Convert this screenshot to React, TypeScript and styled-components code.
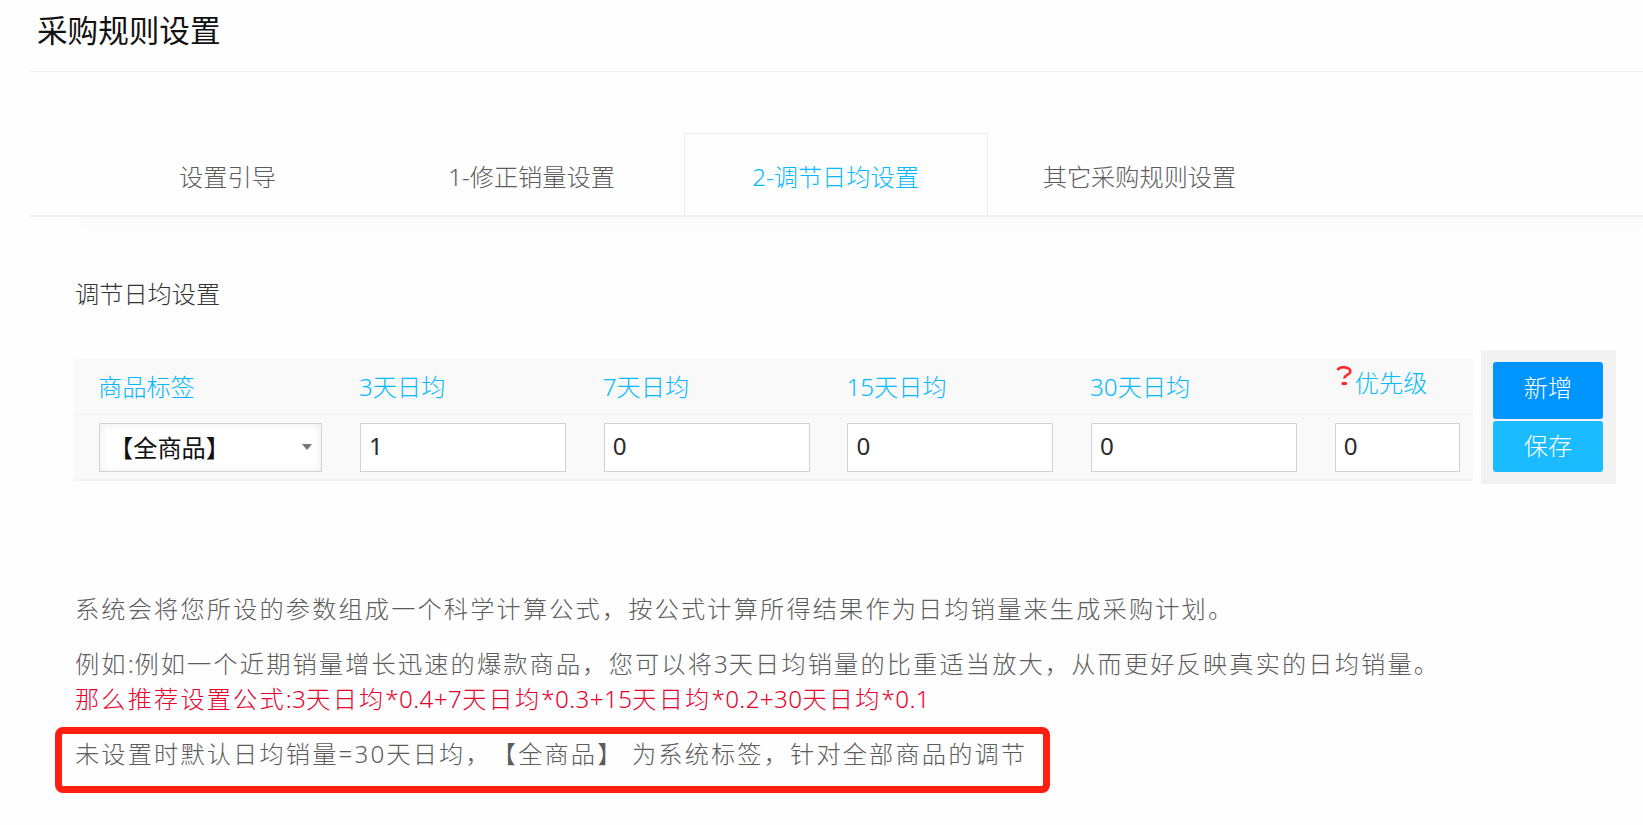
import React, { ReactElement, useState } from 'react'
import styled, { createGlobalStyle } from 'styled-components'

const COLOR = {
  primary: '#1abcff',
  link: '#05b8ff',
  action: '#0094ff',
  text: '#5c5c5c',
  danger: '#e6002d',
  mark: '#ff1e10',
  line: '#f0f0f0',
  panel: '#f9f9f9',
}

const GlobalStyle = createGlobalStyle`
  * {
    box-sizing: border-box;
  }
  body {
    margin: 0;
    background-color: #fefefe;
    font-family: 'Noto Sans', 'Noto Sans CJK SC', sans-serif;
    font-size: 24.2px;
    font-weight: 300;
    color: ${COLOR.text};
    text-spacing-trim: space-all;
    overflow: hidden;
  }
`

const StyledPage = styled.div`
  height: 825px;
  padding-left: 29px;
  overflow: hidden;
`

const StyledHeader = styled.header`
  height: 72px;
  padding: 10px 0 0 8px;
  border-bottom: 1px solid ${COLOR.line};
`

const StyledTitle = styled.h1`
  margin: 0;
  font-size: 30.6px;
  font-weight: 400;
  line-height: 40px;
  color: #111111;
`

const StyledTabs = styled.nav`
  display: flex;
  height: 145px;
  padding: 61px 0 0 47px;
  border-bottom: 2px solid ${COLOR.line};
  box-shadow: 30px 24px 18px -18px rgba(0, 0, 0, 0.025);
`

const StyledTab = styled.button<{ $active: boolean }>`
  width: 304px;
  padding: 2px 1px 0 0;
  border: solid ${({ $active }): string => ($active ? '#ebebeb' : 'transparent')};
  border-width: 1px 1px 0;
  background: none;
  font: inherit;
  color: ${({ $active }): string => ($active ? COLOR.link : COLOR.text)};
  cursor: pointer;
`

const StyledContent = styled.main`
  padding: 59px 27px 0 45px;
`

const StyledSubtitle = styled.h2`
  margin: 0 0 38px 1px;
  font-size: inherit;
  font-weight: 300;
  line-height: 36px;
  color: #333333;
`

const StyledEditor = styled.section`
  display: flex;
  align-items: flex-start;
  justify-content: space-between;
  height: 134px;
`

const StyledTable = styled.div`
  width: 1399px;
  height: 123px;
  margin-top: 8px;
  background-color: ${COLOR.panel};
  border-bottom: 2px solid ${COLOR.line};
`

const StyledRow = styled.div<{ $head?: boolean }>`
  display: grid;
  grid-template-columns: 261px repeat(3, 243.7px) 243.7px 125px;
  height: ${({ $head }): string => ($head ? '57px' : '64px')};
  padding: ${({ $head }): string => ($head ? '12px 0 0 24px' : '8px 0 0 25px')};
  border-bottom: ${({ $head }): string =>
    $head ? `1px solid ${COLOR.line}` : 'none'};
`

const StyledHeadCell = styled.div`
  line-height: 34px;
  color: ${COLOR.link};
`

const StyledPriorityCell = styled(StyledHeadCell)`
  display: flex;
  line-height: 25px;
`

const StyledHelp = styled.svg`
  width: 18px;
  height: 20px;
  margin: -4px 2px 0 1px;
`

const StyledInput = styled.input<{ $short?: boolean }>`
  width: ${({ $short }): string => ($short ? '125px' : '206px')};
  height: 49px;
  padding: 0 0 5px 8px;
  border: 1px solid #d2d2d2;
  background-color: #ffffff;
  font: inherit;
  font-weight: 400;
  color: #2b2b2b;
  outline: none;
`

const StyledSelect = styled.div`
  display: flex;
  align-items: center;
  justify-content: space-between;
  width: 223px;
  height: 49px;
  padding: 0 9px 2px 9px;
  border: 1px solid #d2d2d2;
  background-color: #ffffff;
  box-shadow: inset 0 0 8px rgba(0, 0, 0, 0.08);
  font-weight: 400;
  color: #111111;
  cursor: pointer;
`

const StyledCaret = styled.span`
  border: solid transparent;
  border-width: 6px 5.5px 0;
  border-top-color: #777777;
`

const StyledActions = styled.div`
  display: flex;
  flex-direction: column;
  gap: 2px;
  width: 135px;
  height: 134px;
  padding: 12px 13px 12px 12px;
  background-color: #f2f2f2;
`

const StyledAction = styled.button<{ $primary?: boolean }>`
  height: ${({ $primary }): string => ($primary ? '57px' : '51px')};
  padding: 0 0 ${({ $primary }): string => ($primary ? '8px' : '4px')};
  border: 0;
  border-radius: 3px;
  background-color: ${({ $primary }): string =>
    $primary ? COLOR.action : COLOR.primary};
  font: inherit;
  color: #ffffff;
  cursor: pointer;
`

const StyledNotes = styled.section`
  padding: 107px 0 0 1px;
  letter-spacing: 2.16px;
  white-space: nowrap;
`

const StyledNote = styled.p<{ $gap?: number; $danger?: boolean }>`
  margin: 0 0 ${({ $gap = 0 }): number => $gap}px;
  line-height: 35px;
  color: ${({ $danger }): string => ($danger ? COLOR.danger : 'inherit')};
`

const StyledMarkedNote = styled(StyledNote)`
  width: 995px;
  height: 66px;
  margin-left: -20px;
  padding: 2px 0 0 13px;
  border: 7px solid ${COLOR.mark};
  border-radius: 8px;
`

const StyledLatin = styled.span<{ $spacing?: number }>`
  font-weight: 350;
  letter-spacing: ${({ $spacing }): string =>
    $spacing === undefined ? 'inherit' : `${$spacing}px`};
`

const tabs = ['设置引导', '1-修正销量设置', '2-调节日均设置', '其它采购规则设置']
const columns = ['商品标签', '3天日均', '7天日均', '15天日均', '30天日均']

// digits and operators are set slightly heavier than the Chinese text
const Mixed = ({
  text,
  spacing,
}: {
  text: string
  spacing?: number
}): ReactElement => (
  <span>
    {text.split(/([!-~]+)/).map((part, i) =>
      i % 2 ? (
        <StyledLatin key={i} $spacing={spacing}>
          {part}
        </StyledLatin>
      ) : (
        part
      )
    )}
  </span>
)

const PriorityHead = (): ReactElement => (
  <StyledPriorityCell>
    <StyledHelp viewBox="0 0 18 20" fill="none">
      <path
        d="M2.5 4.2C4 1.6 7 1 10 1.4c4 .5 6 2.6 5 5-.9 2.2-5.6 2.6-5.6 6.1"
        stroke="#ff2a2a"
        strokeWidth="2.6"
      />
      <rect x="6.5" y="16" width="5.5" height="3" rx="1" fill="#ff2a2a" />
    </StyledHelp>
    优先级
  </StyledPriorityCell>
)

const App = (): ReactElement => {
  const [active, setActive] = useState(2)
  const [values, setValues] = useState(['1', '0', '0', '0', '0'])

  const onChange = (index: number, value: string): void => {
    setValues(values.map((v, i) => (i === index ? value : v)))
  }

  return (
    <StyledPage>
      <GlobalStyle />
      <StyledHeader>
        <StyledTitle>采购规则设置</StyledTitle>
      </StyledHeader>

      <StyledTabs>
        {tabs.map((tab, i) => (
          <StyledTab
            key={tab}
            $active={i === active}
            onClick={(): void => setActive(i)}
          >
            <Mixed text={tab} />
          </StyledTab>
        ))}
      </StyledTabs>

      <StyledContent>
        <StyledSubtitle>调节日均设置</StyledSubtitle>

        <StyledEditor>
          <StyledTable>
            <StyledRow $head>
              {columns.map((column) => (
                <StyledHeadCell key={column}>
                  <Mixed text={column} />
                </StyledHeadCell>
              ))}
              <PriorityHead />
            </StyledRow>
            <StyledRow>
              <StyledSelect>
                【全商品】
                <StyledCaret />
              </StyledSelect>
              {values.map((value, i) => (
                <StyledInput
                  key={i}
                  $short={i === values.length - 1}
                  value={value}
                  onChange={(e): void => onChange(i, e.target.value)}
                />
              ))}
            </StyledRow>
          </StyledTable>
          <StyledActions>
            <StyledAction $primary>新增</StyledAction>
            <StyledAction>保存</StyledAction>
          </StyledActions>
        </StyledEditor>

        <StyledNotes>
          <StyledNote $gap={20}>
            系统会将您所设的参数组成一个科学计算公式，按公式计算所得结果作为日均销量来生成采购计划。
          </StyledNote>
          <StyledNote>
            <Mixed
              text="例如:例如一个近期销量增长迅速的爆款商品，您可以将3天日均销量的比重适当放大，从而更好反映真实的日均销量。"
              spacing={0.8}
            />
          </StyledNote>
          <StyledNote $gap={11} $danger>
            <Mixed
              text="那么推荐设置公式:3天日均*0.4+7天日均*0.3+15天日均*0.2+30天日均*0.1"
              spacing={0.4}
            />
          </StyledNote>
          <StyledMarkedNote>
            <Mixed text="未设置时默认日均销量=30天日均，【全商品】 为系统标签，针对全部商品的调节" />
          </StyledMarkedNote>
        </StyledNotes>
      </StyledContent>
    </StyledPage>
  )
}

export default App
